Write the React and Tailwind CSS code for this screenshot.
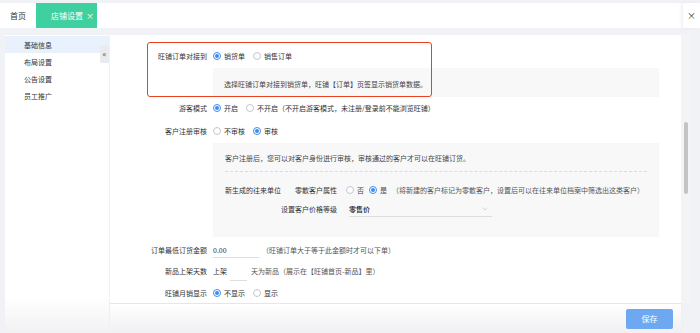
import { ChevronDown } from 'lucide-react';

function Radio({ checked, label }) {
    return (
        <span className="flex items-center gap-[3px] whitespace-nowrap">
            {checked ? (
                <span className="w-[8px] h-[8px] rounded-full border border-[#3b8cf4] bg-white flex items-center justify-center">
                    <span className="w-[4px] h-[4px] rounded-full bg-[#3b8cf4]" />
                </span>
            ) : (
                <span className="w-[8px] h-[8px] rounded-full border border-[#c3c6cc] bg-white" />
            )}
            <span>{label}</span>
        </span>
    );
}

function Row({ label, className = '', children }) {
    return (
        <div className={`flex items-center h-[14px] ${className}`}>
            <div className="w-[97px] text-right text-[#333]">{label}</div>
            <div className="ml-[6px] flex items-center gap-[8px]">{children}</div>
        </div>
    );
}

const menu = ['基础信息', '布局设置', '公告设置', '员工推广'];

export default function App() {
    return (
        <div
            className="w-[700px] h-[333px] bg-[#f0f2f5] flex flex-col overflow-hidden text-[7px] leading-[10px] text-[#333]"
            style={{ fontFamily: '"Noto Sans CJK SC", "Noto Sans", sans-serif' }}
        >
            {/* tab bar */}
            <div className="mt-[3px] h-[25px] bg-white flex items-stretch shrink-0">
                <div className="flex items-center pl-[10px] w-[36px] text-[8px] text-[#333]">首页</div>
                <div className="flex items-center gap-[3px] pl-[15px] w-[61px] bg-[#3fd0a0] text-white text-[8px] whitespace-nowrap">
                    <span>店铺设置</span>
                    <span className="text-[8px]">×</span>
                </div>
                <div className="flex-1" />
                <div className="w-[17px] flex items-center justify-center text-[9px] text-[#333] shadow-[-2px_0_3px_rgba(0,0,0,0.06)]">
                    ×
                </div>
            </div>

            {/* body */}
            <div className="mt-[7px] flex flex-1 min-h-0 pl-[5px]">
                {/* sidebar */}
                <div className="relative w-[104px] bg-[linear-gradient(to_bottom,#fff_88%,#f1f1f3)] pt-[1px]">
                    {menu.map((m, i) => (
                        <div
                            key={m}
                            className={`h-[17px] flex items-center pl-[19px] ${i === 0 ? 'bg-[#e8f1fc]' : ''}`}
                        >
                            {m}
                        </div>
                    ))}
                    <div className="absolute right-0 top-[10px] w-[9px] h-[18px] bg-[#e9ebf0] rounded-l-[2px] flex items-center justify-center text-[8px] text-[#444]">
                        «
                    </div>
                </div>

                {/* main column */}
                <div className="ml-[1px] w-[580px] flex flex-col">
                    <div className="flex flex-1 min-h-0">
                        <div className="relative w-[571px] bg-white pt-[14px]">
                            <Row label="旺铺订单对接到">
                                <Radio checked label="销货单" />
                                <Radio label="销售订单" />
                            </Row>
                            <div className="mt-[5px] ml-[103px] w-[446px] h-[29px] bg-[#f8f8f9] flex items-center pl-[11px] pt-[3px] text-[#444]">
                                选择旺铺订单对接到销货单，旺铺【订单】页签显示销货单数据。
                            </div>

                            <Row label="游客模式" className="mt-[4px]">
                                <Radio checked label="开启" />
                                <Radio label="不开启（不开启游客模式，未注册/登录前不能浏览旺铺）" />
                            </Row>
                            <Row label="客户注册审核" className="mt-[9px]">
                                <Radio label="不审核" />
                                <Radio checked label="审核" />
                            </Row>

                            <div className="mt-[5px] ml-[103px] w-[446px] h-[94px] bg-[#f8f8f9] px-[12px] pt-[10px] text-[#444]">
                                <div className="h-[10px] flex items-center">
                                    客户注册后，您可以对客户身份进行审核，审核通过的客户才可以在旺铺订货。
                                </div>
                                <div className="mt-[8px] border-t border-dashed border-[#dcdcdc]" />
                                <div className="mt-[13px] h-[10px] flex items-center">
                                    <div className="w-[112px] flex justify-between text-[#333]">
                                        <span>新生成的往来单位</span>
                                        <span>零散客户属性</span>
                                    </div>
                                    <div className="ml-[9px] flex items-center gap-[5px]">
                                        <Radio label="否" />
                                        <Radio checked label="是" />
                                        <span className="text-[#555]">（将新建的客户标记为零散客户，设置后可以在往来单位档案中筛选出这类客户）</span>
                                    </div>
                                </div>
                                <div className="mt-[6px] h-[16px] flex items-center">
                                    <div className="w-[112px] text-right text-[#333]">设置客户价格等级</div>
                                    <div className="ml-[12px] w-[143px] h-[16px] flex items-center justify-between border-b border-[#dedede] pr-[3px]">
                                        <span className="font-medium text-[#222]">零售价</span>
                                        <ChevronDown size={8} strokeWidth={1.5} className="text-[#8fb4e8]" />
                                    </div>
                                </div>
                            </div>

                            <div className="mt-[5px] flex items-center h-[16px]">
                                <div className="w-[97px] text-right">订单最低订货金额</div>
                                <div className="ml-[6px] w-[46px] h-[16px] flex items-center border-b border-[#dedede] text-[#222]">0.00</div>
                                <span className="ml-[3px] text-[#555]">（旺铺订单大于等于此金额时才可以下单）</span>
                            </div>
                            <div className="mt-[5px] flex items-center h-[16px]">
                                <div className="w-[97px] text-right">新品上架天数</div>
                                <span className="ml-[6px]">上架</span>
                                <div className="ml-[3px] w-[17px] h-[16px] border-b border-[#dedede] translate-y-[2px]" />
                                <span className="ml-[4px] text-[#555]">天为新品（展示在【旺铺首页-新品】里）</span>
                            </div>
                            <Row label="旺铺月销显示" className="mt-[7px]">
                                <Radio checked label="不显示" />
                                <Radio label="显示" />
                            </Row>

                            {/* annotation */}
                            <div className="absolute left-[37px] top-[7px] w-[285px] h-[55px] border-[1.5px] border-[#e9401f] rounded-[3px]" />
                        </div>
                        <div className="w-[9px] bg-[#f4f4f6] pt-[87px] pl-[3px]">
                            <div className="w-[4px] h-[72px] rounded-full bg-[#c4c4c4]" />
                        </div>
                    </div>
                    <div className="h-[30px] w-[571px] flex items-center justify-end pr-[8px] border-t border-[#e6e6e6] bg-[linear-gradient(to_bottom,#fff,#f0f0f2)] shadow-[0_-1px_2px_rgba(0,0,0,0.03)]">
                        <button className="w-[47px] h-[20px] rounded-[2px] bg-[#6ea8f1] text-white text-[8px]">保存</button>
                    </div>
                </div>
            </div>
        </div>
    );
}
